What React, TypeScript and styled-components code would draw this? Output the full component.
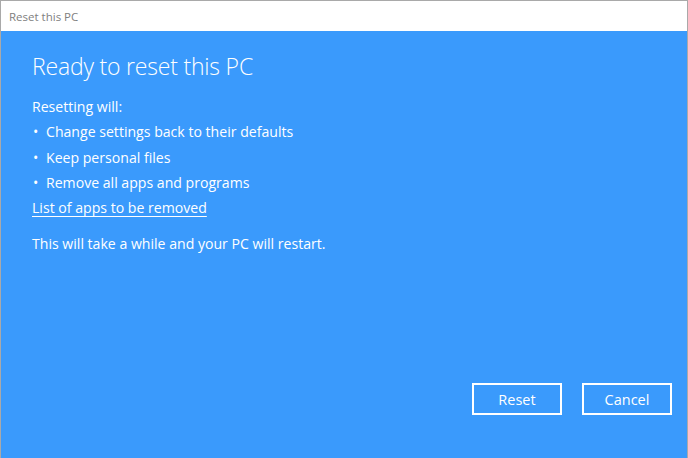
import React from "react";
import styled, { createGlobalStyle } from "styled-components";

const Global = createGlobalStyle`
  html, body { margin: 0; padding: 0; }
  body { width: 688px; height: 458px; overflow: hidden; background: #ffffff; }
  #root { width: 688px; height: 458px; }
`;

const Window = styled.div`
  width: 688px;
  height: 458px;
  box-sizing: border-box;
  display: flex;
  flex-direction: column;
  border-top: 1px solid #a9a9a9;
  border-left: 1px solid #a9a9a9;
  border-right: 1px solid #a9a9a9;
  font-family: "Open Sans", "Noto Sans", sans-serif;
`;

const TitleBar = styled.div`
  height: 30px;
  flex: none;
  background: #ffffff;
  display: flex;
  align-items: center;
  padding-left: 8px;
  font-size: 11.5px;
  color: #808080;
`;

const Body = styled.div`
  flex: 1;
  background: #3a9afc;
  color: #ffffff;
  display: flex;
  flex-direction: column;
  padding: 19px 15px 43px 31px;
`;

const Heading = styled.h1`
  margin: 0 0 12px 0;
  font-weight: 300;
  font-size: 23px;
  line-height: 32px;
  letter-spacing: -0.2px;
`;

const Line = styled.div<{ $gap?: number }>`
  font-size: 14.1px;
  line-height: 25.3px;
  margin-bottom: ${(p) => p.$gap ?? 0}px;
  display: flex;
`;

const Bullet = styled.span`
  width: 13px;
  flex: none;
  padding-left: 1px;
`;

const Link = styled.a`
  color: #ffffff;
  text-decoration: underline;
  text-underline-offset: 3px;
  cursor: pointer;
`;

const Spacer = styled.div`
  flex: 1;
`;

const Buttons = styled.div`
  display: flex;
  justify-content: flex-end;
  gap: 20px;
`;

const Button = styled.button`
  width: 90px;
  height: 32px;
  box-sizing: border-box;
  border: 2px solid #ffffff;
  background: transparent;
  color: #ffffff;
  font-family: inherit;
  font-size: 14.5px;
  padding: 0;
`;

const items = [
  "Change settings back to their defaults",
  "Keep personal files",
  "Remove all apps and programs",
];

export default function App() {
  return (
    <>
      <Global />
      <Window>
        <TitleBar>Reset this PC</TitleBar>
        <Body>
          <Heading>Ready to reset this PC</Heading>
          <Line>Resetting will:</Line>
          {items.map((t) => (
            <Line key={t}>
              <Bullet>•</Bullet>
              {t}
            </Line>
          ))}
          <Line $gap={11}>
            <Link>List of apps to be removed</Link>
          </Line>
          <Line>This will take a while and your PC will restart.</Line>
          <Spacer />
          <Buttons>
            <Button>Reset</Button>
            <Button>Cancel</Button>
          </Buttons>
        </Body>
      </Window>
    </>
  );
}
